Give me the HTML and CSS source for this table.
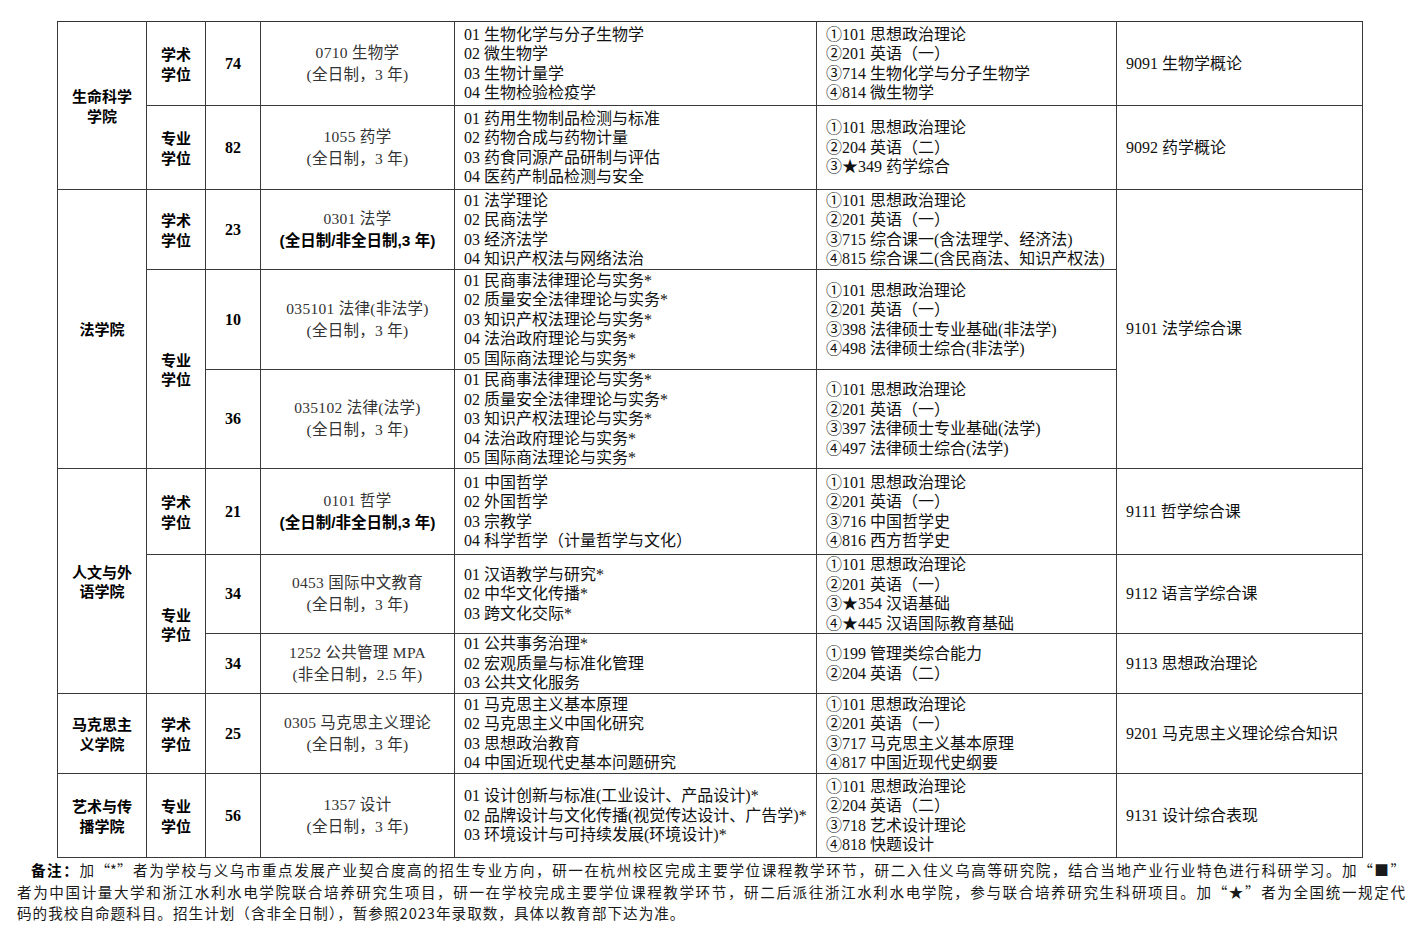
FILE: index.html
```html
<!DOCTYPE html>
<html lang="zh-CN">
<head>
<meta charset="utf-8">
<title>招生目录</title>
<link rel="stylesheet" href="styles.css">
</head>
<body>
<table class="plan">
  <colgroup>
    <col class="c1"><col class="c2"><col class="c3"><col class="c4"><col class="c5"><col class="c6"><col class="c7">
  </colgroup>
  <tbody>
    <tr class="h84 grp">
      <td class="college" rowspan="2">生命科学<br>学院</td>
      <td class="type">学术<br>学位</td>
      <td class="num">74</td>
      <td class="major">0710 生物学<br>(全日制，3 年)</td>
      <td class="list">01 生物化学与分子生物学<br>02 微生物学<br>03 生物计量学<br>04 生物检验检疫学</td>
      <td class="list">①101 思想政治理论<br>②201 英语（一）<br>③714 生物化学与分子生物学<br>④814 微生物学</td>
      <td class="code">9091 生物学概论</td>
    </tr>
    <tr class="h84">
      <td class="type">专业<br>学位</td>
      <td class="num">82</td>
      <td class="major">1055 药学<br>(全日制，3 年)</td>
      <td class="list">01 药用生物制品检测与标准<br>02 药物合成与药物计量<br>03 药食同源产品研制与评估<br>04 医药产制品检测与安全</td>
      <td class="list">①101 思想政治理论<br>②204 英语（二）<br>③★349 药学综合</td>
      <td class="code">9092 药学概论</td>
    </tr>
    <tr class="h80 grp">
      <td class="college" rowspan="3">法学院</td>
      <td class="type">学术<br>学位</td>
      <td class="num">23</td>
      <td class="major">0301 法学<br><b class="strong">(全日制/非全日制,3 年)</b></td>
      <td class="list">01 法学理论<br>02 民商法学<br>03 经济法学<br>04 知识产权法与网络法治</td>
      <td class="list">①101 思想政治理论<br>②201 英语（一）<br>③715 综合课一(含法理学、经济法)<br>④815 综合课二(含民商法、知识产权法)</td>
      <td class="code" rowspan="3">9101 法学综合课</td>
    </tr>
    <tr class="h100">
      <td class="type" rowspan="2">专业<br>学位</td>
      <td class="num">10</td>
      <td class="major">035101 法律(非法学)<br>(全日制，3 年)</td>
      <td class="list">01 民商事法律理论与实务*<br>02 质量安全法律理论与实务*<br>03 知识产权法理论与实务*<br>04 法治政府理论与实务*<br>05 国际商法理论与实务*</td>
      <td class="list">①101 思想政治理论<br>②201 英语（一）<br>③398 法律硕士专业基础(非法学)<br>④498 法律硕士综合(非法学)</td>
    </tr>
    <tr class="h99">
      <td class="num">36</td>
      <td class="major">035102 法律(法学)<br>(全日制，3 年)</td>
      <td class="list">01 民商事法律理论与实务*<br>02 质量安全法律理论与实务*<br>03 知识产权法理论与实务*<br>04 法治政府理论与实务*<br>05 国际商法理论与实务*</td>
      <td class="list">①101 思想政治理论<br>②201 英语（一）<br>③397 法律硕士专业基础(法学)<br>④497 法律硕士综合(法学)</td>
    </tr>
    <tr class="h86 grp">
      <td class="college" rowspan="3">人文与外<br>语学院</td>
      <td class="type">学术<br>学位</td>
      <td class="num">21</td>
      <td class="major">0101 哲学<br><b class="strong">(全日制/非全日制,3 年)</b></td>
      <td class="list">01 中国哲学<br>02 外国哲学<br>03 宗教学<br>04 科学哲学（计量哲学与文化）</td>
      <td class="list">①101 思想政治理论<br>②201 英语（一）<br>③716 中国哲学史<br>④816 西方哲学史</td>
      <td class="code">9111 哲学综合课</td>
    </tr>
    <tr class="h79">
      <td class="type" rowspan="2">专业<br>学位</td>
      <td class="num">34</td>
      <td class="major">0453 国际中文教育<br>(全日制，3 年)</td>
      <td class="list">01 汉语教学与研究*<br>02 中华文化传播*<br>03 跨文化交际*</td>
      <td class="list">①101 思想政治理论<br>②201 英语（一）<br>③★354 汉语基础<br>④★445 汉语国际教育基础</td>
      <td class="code">9112 语言学综合课</td>
    </tr>
    <tr class="h60">
      <td class="num">34</td>
      <td class="major">1252 公共管理 MPA<br>(非全日制，2.5 年)</td>
      <td class="list">01 公共事务治理*<br>02 宏观质量与标准化管理<br>03 公共文化服务</td>
      <td class="list">①199 管理类综合能力<br>②204 英语（二）</td>
      <td class="code">9113 思想政治理论</td>
    </tr>
    <tr class="h80 grp">
      <td class="college">马克思主<br>义学院</td>
      <td class="type">学术<br>学位</td>
      <td class="num">25</td>
      <td class="major">0305 马克思主义理论<br>(全日制，3 年)</td>
      <td class="list">01 马克思主义基本原理<br>02 马克思主义中国化研究<br>03 思想政治教育<br>04 中国近现代史基本问题研究</td>
      <td class="list">①101 思想政治理论<br>②201 英语（一）<br>③717 马克思主义基本原理<br>④817 中国近现代史纲要</td>
      <td class="code">9201 马克思主义理论综合知识</td>
    </tr>
    <tr class="h84 grp">
      <td class="college">艺术与传<br>播学院</td>
      <td class="type">专业<br>学位</td>
      <td class="num">56</td>
      <td class="major">1357 设计<br>(全日制，3 年)</td>
      <td class="list">01 设计创新与标准(工业设计、产品设计)*<br>02 品牌设计与文化传播(视觉传达设计、广告学)*<br>03 环境设计与可持续发展(环境设计)*</td>
      <td class="list">①101 思想政治理论<br>②204 英语（二）<br>③718 艺术设计理论<br>④818 快题设计</td>
      <td class="code">9131 设计综合表现</td>
    </tr>
  </tbody>
</table>
<div class="notes">
  <span class="line first"><b class="label">备注：</b>加“*”者为学校与义乌市重点发展产业契合度高的招生专业方向，研一在杭州校区完成主要学位课程教学环节，研二入住义乌高等研究院，结合当地产业行业特色进行科研学习。加“■”</span>
  <span class="line">者为中国计量大学和浙江水利水电学院联合培养研究生项目，研一在学校完成主要学位课程教学环节，研二后派往浙江水利水电学院，参与联合培养研究生科研项目。加“★”者为全国统一规定代</span>
  <span class="line last">码的我校自命题科目。招生计划（含非全日制），暂参照2023年录取数，具体以教育部下达为准。</span>
</div>
</body>
</html>
```

FILE: styles.css
```css
html, body {
  margin: 0;
  padding: 0;
  background: #ffffff;
}

body {
  font-family: "Liberation Serif", "Noto Sans CJK SC", serif;
  color: #111111;
  width: 1415px;
}

.plan {
  border-collapse: collapse;
  table-layout: fixed;
  width: 1305px;
  margin: 21px 0 0 57px;
  border: 1px solid #222222;
}

.c1 { width: 89px; }
.c2 { width: 59px; }
.c3 { width: 55px; }
.c4 { width: 194px; }
.c5 { width: 362px; }
.c6 { width: 300px; }
.c7 { width: 246px; }

.plan td {
  border: 1px solid #3a3a3a;
  padding: 0;
  vertical-align: middle;
  font-size: 16px;
  line-height: 19.5px;
}

.plan tr.grp td {
  border-top-color: #333333;
}

.h84 { height: 84px; }
.h80 { height: 80px; }
.h100 { height: 100px; }
.h99 { height: 99px; }
.h86 { height: 86px; }
.h79 { height: 79px; }
.h60 { height: 60px; }

.plan td.college,
.plan td.type {
  font-family: "Noto Sans CJK SC", sans-serif;
  font-weight: 700;
  font-size: 15px;
  line-height: 19.5px;
  text-align: center;
  color: #000000;
}

.plan td.num {
  font-family: "Liberation Serif", serif;
  font-weight: 700;
  font-size: 16px;
  text-align: center;
  color: #000000;
}

.plan td.major {
  text-align: center;
  font-size: 15.5px;
  line-height: 22px;
  color: #333333;
  letter-spacing: 0.3px;
}

.strong {
  font-family: "Liberation Sans", "Noto Sans CJK SC", sans-serif;
  font-weight: 700;
  color: #000000;
  letter-spacing: 0;
}

.plan td.list {
  padding-left: 9px;
  white-space: nowrap;
}

.plan td.code {
  padding-left: 9px;
}

.notes {
  width: 1388px;
  margin: 1px 0 0 17px;
  font-family: "Noto Sans CJK SC", sans-serif;
  font-size: 14.6px;
  line-height: 21.5px;
  color: #1a1a1a;
}

.notes .line {
  display: block;
  text-align: justify;
  text-align-last: justify;
  white-space: nowrap;
}

.notes .line.first {
  padding-left: 14px;
}

.notes .line.last {
  text-align: left;
  text-align-last: left;
  letter-spacing: 1px;
}

.label {
  font-weight: 700;
  color: #000000;
}
```
